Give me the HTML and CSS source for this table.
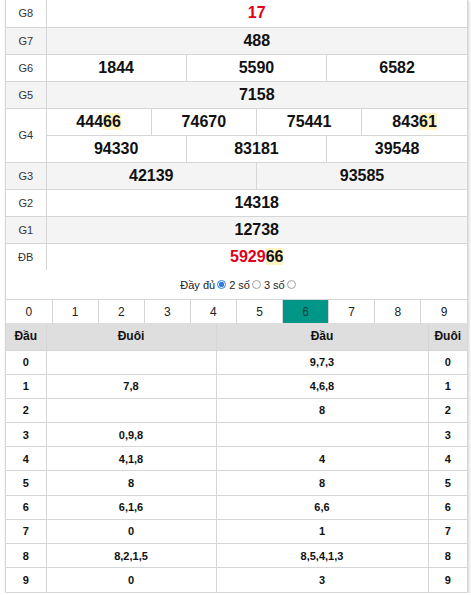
FILE: index.html
```html
<!DOCTYPE html>
<html lang="vi">
<head>
<meta charset="utf-8">
<link rel="stylesheet" href="styles.css">
</head>
<body>
<div class="box">
  <table class="kq">
    <colgroup>
      <col class="c-label">
      <col span="12">
    </colgroup>
    <tr>
      <td class="lbl">G8</td>
      <td colspan="12" class="num red">17</td>
    </tr>
    <tr class="alt">
      <td class="lbl">G7</td>
      <td colspan="12" class="num">488</td>
    </tr>
    <tr>
      <td class="lbl">G6</td>
      <td colspan="4" class="num">1844</td>
      <td colspan="4" class="num">5590</td>
      <td colspan="4" class="num">6582</td>
    </tr>
    <tr class="alt">
      <td class="lbl">G5</td>
      <td colspan="12" class="num">7158</td>
    </tr>
    <tr>
      <td class="lbl" rowspan="2">G4</td>
      <td colspan="3" class="num">444<span class="hl">66</span></td>
      <td colspan="3" class="num">74670</td>
      <td colspan="3" class="num">75441</td>
      <td colspan="3" class="num">843<span class="hl">61</span></td>
    </tr>
    <tr>
      <td colspan="4" class="num">94330</td>
      <td colspan="4" class="num">83181</td>
      <td colspan="4" class="num">39548</td>
    </tr>
    <tr class="alt">
      <td class="lbl">G3</td>
      <td colspan="6" class="num">42139</td>
      <td colspan="6" class="num">93585</td>
    </tr>
    <tr>
      <td class="lbl">G2</td>
      <td colspan="12" class="num">14318</td>
    </tr>
    <tr class="alt">
      <td class="lbl">G1</td>
      <td colspan="12" class="num">12738</td>
    </tr>
    <tr>
      <td class="lbl">ĐB</td>
      <td colspan="12" class="num"><span class="red">5929</span><span class="hl">66</span></td>
    </tr>
  </table>

  <div class="opts">
    <span>Đầy đủ</span><span class="radio on"></span>
    <span>2 số</span><span class="radio"></span>
    <span>3 số</span><span class="radio"></span>
  </div>

  <table class="tabs">
    <tr>
      <td>0</td><td>1</td><td>2</td><td>3</td><td>4</td>
      <td>5</td><td class="active">6</td><td>7</td><td>8</td><td>9</td>
    </tr>
  </table>

  <table class="lt">
    <colgroup>
      <col class="c-d1">
      <col class="c-t1">
      <col class="c-d2">
      <col class="c-t2">
    </colgroup>
    <tr class="head">
      <th>Đầu</th><th>Đuôi</th><th>Đầu</th><th>Đuôi</th>
    </tr>
    <tr><td>0</td><td></td><td>9,7,3</td><td>0</td></tr>
    <tr><td>1</td><td>7,8</td><td>4,6,8</td><td>1</td></tr>
    <tr><td>2</td><td></td><td>8</td><td>2</td></tr>
    <tr><td>3</td><td>0,9,8</td><td></td><td>3</td></tr>
    <tr><td>4</td><td>4,1,8</td><td>4</td><td>4</td></tr>
    <tr><td>5</td><td>8</td><td>8</td><td>5</td></tr>
    <tr><td>6</td><td>6,1,6</td><td>6,6</td><td>6</td></tr>
    <tr><td>7</td><td>0</td><td>1</td><td>7</td></tr>
    <tr><td>8</td><td>8,2,1,5</td><td>8,5,4,1,3</td><td>8</td></tr>
    <tr><td>9</td><td>0</td><td>3</td><td>9</td></tr>
  </table>
</div>
</body>
</html>
```

FILE: styles.css
```css
* { box-sizing: border-box; }

body {
  margin: 0;
  background: #fff;
  font-family: "Liberation Sans", Arial, sans-serif;
  color: #111;
}

.box {
  margin: 0 0 0 5px;
  width: 463px;
  border: 1px solid #d6d6d6;
  border-top: none;
  box-shadow: 1px 1px 3px rgba(0, 0, 0, 0.18);
  background: #fff;
}

table {
  width: 100%;
  border-collapse: collapse;
  table-layout: fixed;
  border-style: hidden;
}

td, th {
  border: 1px solid #d6d6d6;
  padding: 0;
  text-align: center;
}

/* results table */
.kq .c-label { width: 40px; }
.kq tr { height: 27px; }
.kq .alt td { background: #f4f4f4; }
.kq .lbl {
  font-size: 11px;
  color: #333;
}
.kq .num {
  font-size: 16px;
  font-weight: bold;
  color: #111;
}
.red { color: #e1001a !important; }
.hl { background: #fff5c2; }

/* options */
.opts {
  height: 30px;
  display: flex;
  align-items: center;
  justify-content: center;
  gap: 2px;
  font-size: 11px;
  color: #222;
  border-bottom: 1px solid #d6d6d6;
  padding-left: 4px;
}
.radio {
  display: inline-block;
  width: 9px;
  height: 9px;
  border: 1px solid #a0a0a0;
  border-radius: 50%;
  background: #fff;
  margin-right: 1px;
}
.radio.on {
  border-color: #2f7de1;
  background: radial-gradient(circle, #2f7de1 0 2.5px, #fff 3px);
}

/* digit tabs */
.tabs tr { height: 23px; }
.tabs td {
  font-size: 12px;
  color: #222;
}
.tabs td.active {
  background: #009688;
  color: #1c3f3b;
}

/* lo to table */
.lt .c-d1 { width: 40px; }
.lt .c-t1 { width: 170px; }
.lt .c-t2 { width: 39px; }
.lt .head { height: 27px; }
.lt th {
  background: #dedede;
  font-size: 12px;
  font-weight: bold;
  color: #111;
  border-top-color: #d6d6d6;
}
.lt tr { height: 24.2px; }
.lt td {
  font-size: 11px;
  font-weight: bold;
  color: #111;
}
```
